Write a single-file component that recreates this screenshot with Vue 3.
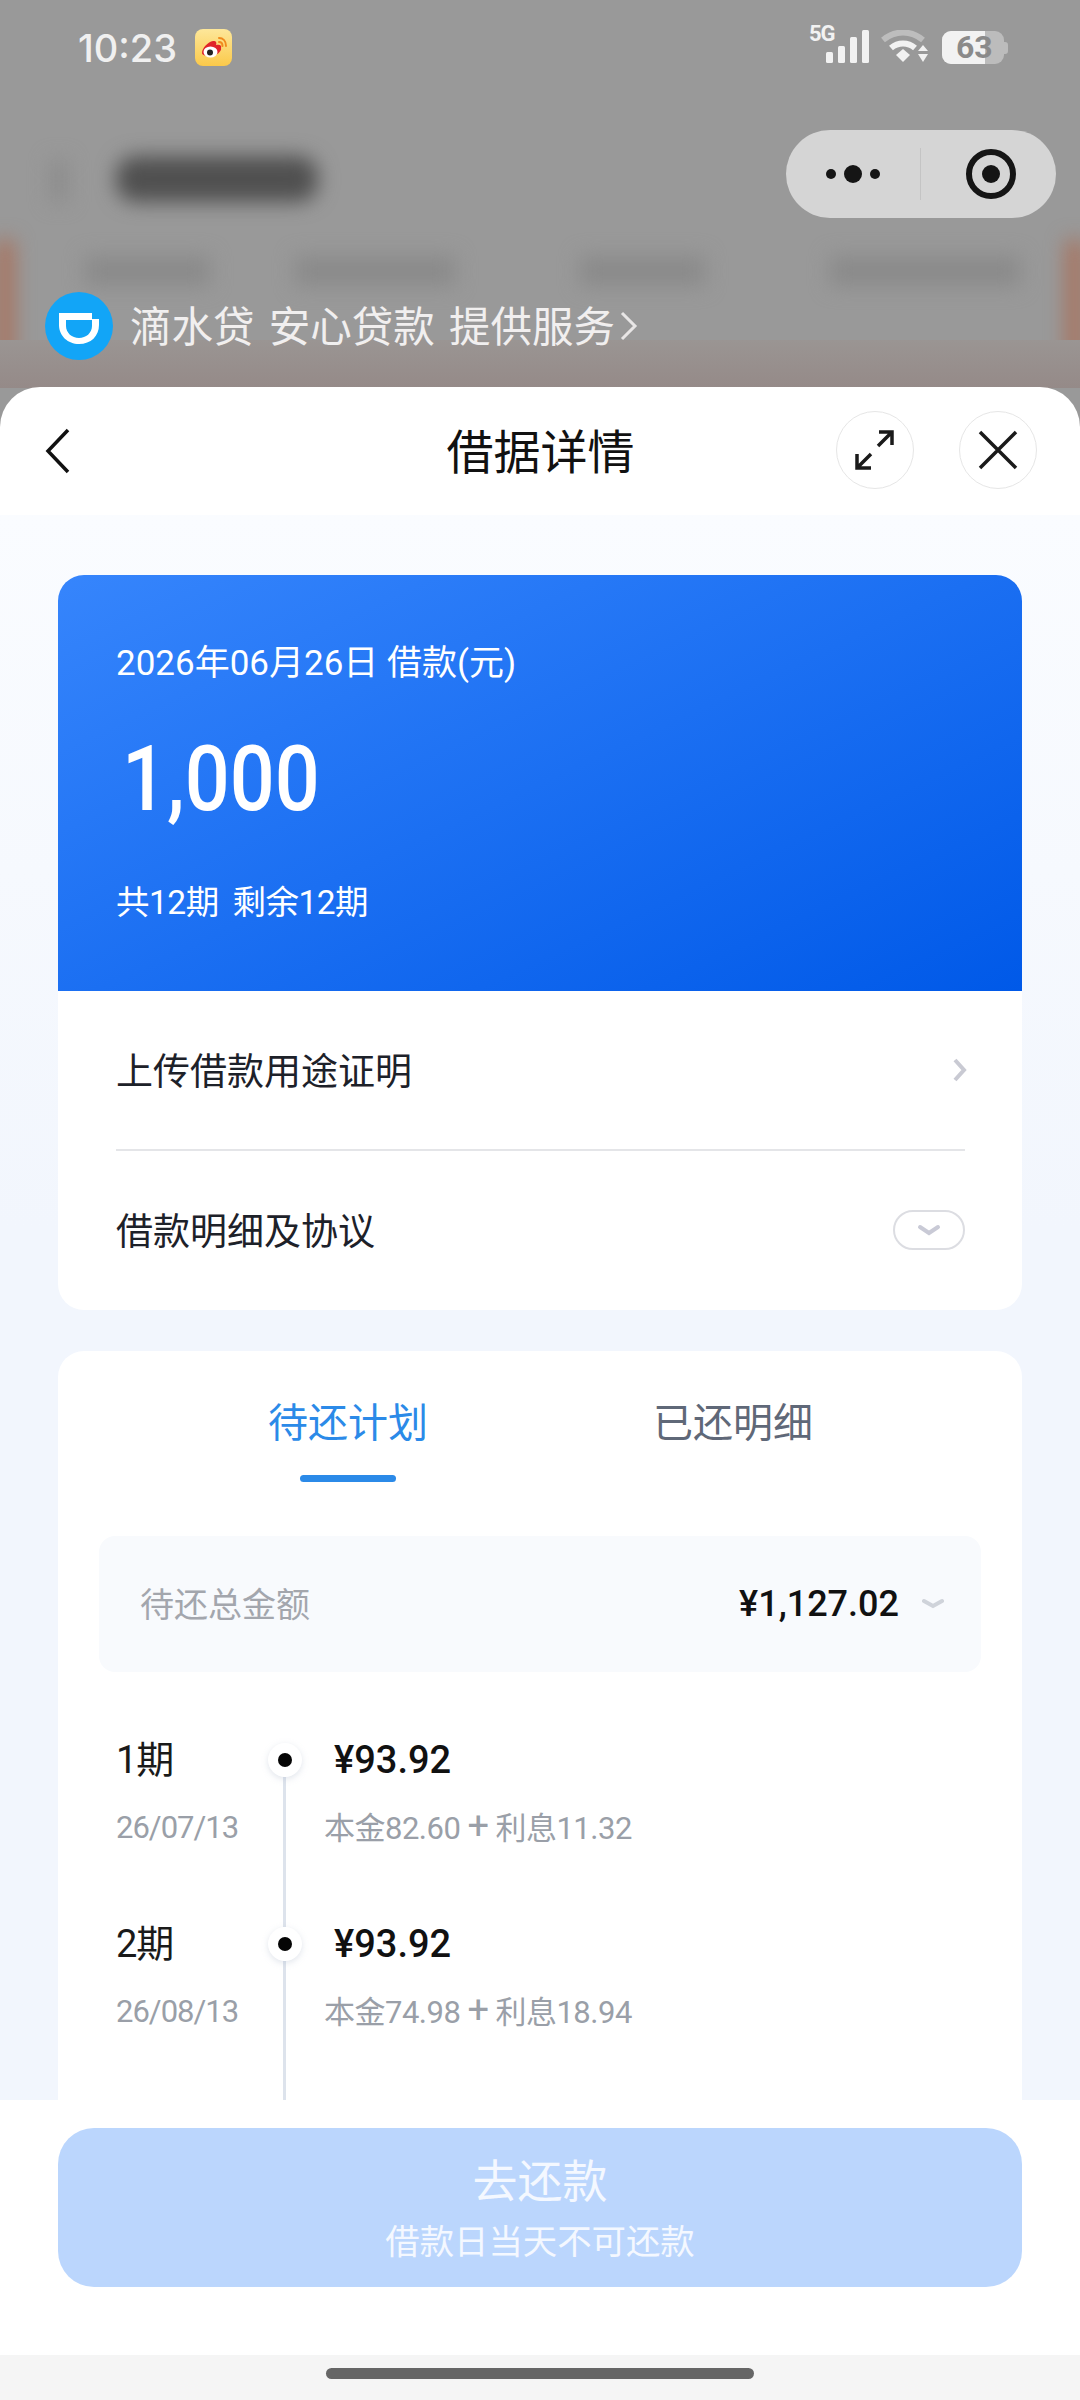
<template>
  <div class="page">
    <div class="backdrop">
      <div class="blur-layer">
        <span class="blur blur-back"></span>
        <span class="blur blur-title"></span>
        <span class="blur blur-side left"></span>
        <span class="blur blur-side right"></span>
        <span class="blur blur-tab t1"></span>
        <span class="blur blur-tab t2"></span>
        <span class="blur blur-tab t3"></span>
        <span class="blur blur-tab t4"></span>
        <span class="blur-band"></span>
      </div>

      <div class="status-bar">
        <div class="status-left">
          <span class="time">10:23</span>
          <svg class="weibo" width="38" height="38" viewBox="0 0 38 38">
            <defs>
              <linearGradient id="wb" x1="0" y1="0" x2="0" y2="1">
                <stop offset="0" stop-color="#fde79a" />
                <stop offset="1" stop-color="#fbc94a" />
              </linearGradient>
            </defs>
            <rect width="37" height="37" rx="8" fill="url(#wb)" />
            <path d="M7 24c0-5 6-11 11-12 3-.6 4 1.400 3 4 4-1 6 .5 5 3 1 3-4 8-11 8-5 0-8-1-8-3z" fill="#e0252a" />
            <ellipse cx="15.500" cy="23" rx="7" ry="5.500" fill="#fff" />
            <circle cx="15" cy="23.500" r="3" fill="#222" />
            <path d="M24 9c4 0 7 3 7 8M24 13c2 0 3.500 1.500 3.500 4" fill="none" stroke="#f08a1d" stroke-width="2" stroke-linecap="round" />
          </svg>
        </div>
        <div class="status-right">
          <div class="signal">
            <span class="net">5G</span>
            <svg width="44" height="34" viewBox="0 0 44 34">
              <rect x="0" y="22" width="7" height="11" rx="1.500" fill="#f2f2f2" />
              <rect x="12" y="16" width="7" height="17" rx="1.500" fill="#f2f2f2" />
              <rect x="24" y="7" width="7" height="26" rx="1.500" fill="#f2f2f2" />
              <rect x="36" y="0" width="7" height="33" rx="1.500" fill="#f2f2f2" />
            </svg>
          </div>
          <svg class="wifi" width="50" height="34" viewBox="0 0 50 34">
            <path d="M3 10C15 0 31 0 43 10" fill="none" stroke="#bdbdbd" stroke-width="6" />
            <path d="M11 18C18 12 28 12 35 18" fill="none" stroke="#f2f2f2" stroke-width="6" />
            <path d="M16 25l7-6 7 6-7 7z" fill="#f2f2f2" />
            <path d="M38 21l5-6 5 6zM38 24h10l-5 8z" fill="#f2f2f2" />
          </svg>
          <div class="battery">
            <span class="battery-fill"></span>
            <span class="battery-num">63</span>
            <span class="battery-cap"></span>
          </div>
        </div>
      </div>

      <div class="capsule">
        <div class="capsule-dots">
          <i class="dot-s"></i><i class="dot-l"></i><i class="dot-s"></i>
        </div>
        <span class="capsule-line"></span>
        <div class="capsule-target"><i></i></div>
      </div>

      <div class="brand">
        <svg class="brand-logo" width="68" height="68" viewBox="0 0 68 68">
          <circle cx="34" cy="34" r="34" fill="#12a5f7" />
          <path fill="#fff" fill-rule="evenodd" d="M14 21H47V27H54V33C54 44 46 52 34 52C23 52 14 44 14 33ZM21 28V34C21 41 27 46 34 46C41 46 47 41 47 34V28Z" />
        </svg>
        <span class="brand-text">滴水贷 安心贷款 提供服务</span>
        <svg width="20" height="32" viewBox="0 0 20 32">
          <path d="M3 3l13 13-13 13" fill="none" stroke="#e8e6e6" stroke-width="3" />
        </svg>
      </div>
    </div>

    <div class="sheet">
      <div class="sheet-head">
        <svg class="back" width="28" height="46" viewBox="0 0 28 46">
          <path d="M24 2L4 23l20 21" fill="none" stroke="#111" stroke-width="3.500" />
        </svg>
        <div class="sheet-title">借据详情</div>
        <div class="head-actions">
          <div class="round-btn">
            <svg width="44" height="44" viewBox="0 0 44 44">
              <path d="M25 18L38 5M26 4h13v13M18 26L5 39M4 26v14h14" fill="none" stroke="#1a1a1a" stroke-width="3.500" />
            </svg>
          </div>
          <div class="round-btn">
            <svg width="40" height="40" viewBox="0 0 40 40">
              <path d="M2 2l36 36M38 2L2 38" fill="none" stroke="#1a1a1a" stroke-width="3.500" />
            </svg>
          </div>
        </div>
      </div>

      <div class="content">
        <div class="card">
          <div class="loan-head">
            <div class="loan-date">2026年06月26日 借款(元)</div>
            <div class="loan-amount">1,000</div>
            <div class="loan-period">共12期 剩余12期</div>
          </div>
          <div class="link-list">
            <div class="link-row line">
              <span>上传借款用途证明</span>
              <svg width="16" height="24" viewBox="0 0 16 24">
                <path d="M3 2l9 10-9 10" fill="none" stroke="#c9cad3" stroke-width="4" />
              </svg>
            </div>
            <div class="link-row">
              <span>借款明细及协议</span>
              <div class="pill">
                <svg width="24" height="12" viewBox="0 0 24 12">
                  <path d="M3 3l9 6 9-6" fill="none" stroke="#c9cad6" stroke-width="4" stroke-linecap="round" />
                </svg>
              </div>
            </div>
          </div>
        </div>

        <div class="card plan">
          <div class="tabs">
            <div class="tab active">待还计划</div>
            <div class="tab">已还明细</div>
          </div>

          <div class="total">
            <span class="total-label">待还总金额</span>
            <div class="total-right">
              <span class="total-num">¥1,127.02</span>
              <svg width="22" height="12" viewBox="0 0 22 12">
                <path d="M2 3l9 5 9-5" fill="none" stroke="#cfd3da" stroke-width="4" stroke-linecap="round" />
              </svg>
            </div>
          </div>

          <div class="timeline">
            <div v-for="item in plans" :key="item.no" class="plan-row">
              <div class="plan-left">
                <div class="plan-no">{{ item.no }}期</div>
                <div class="plan-date">{{ item.date }}</div>
              </div>
              <div class="axis">
                <div class="axis-dot"><i></i></div>
                <div class="axis-line"></div>
              </div>
              <div class="plan-right">
                <div class="plan-money">¥{{ item.money }}</div>
                <div class="plan-detail">
                  本金{{ item.base }}<em>+</em>利息{{ item.rate }}
                </div>
              </div>
            </div>
          </div>
        </div>
      </div>

      <div class="footer">
        <div class="pay-btn">
          <div class="pay-title">去还款</div>
          <div class="pay-sub">借款日当天不可还款</div>
        </div>
      </div>

      <div class="nav-bar"><span></span></div>
    </div>
  </div>
</template>

<script setup>
const plans = [
  { no: 1, date: '26/07/13', money: '93.92', base: '82.60', rate: '11.32' },
  { no: 2, date: '26/08/13', money: '93.92', base: '74.98', rate: '18.94' }
]
</script>

<style>
html,
body {
  margin: 0;
  background: #999;
}
</style>

<style scoped>
.page {
  width: 1080px;
  height: 2400px;
  display: flex;
  flex-direction: column;
  overflow: hidden;
  font-family: Roboto, "Noto Sans CJK SC", sans-serif;
}

.backdrop {
  position: relative;
  height: 388px;
  flex: none;
  background: #999;
  overflow: hidden;
}

.blur-layer {
  position: absolute;
  inset: 0;
}

.blur {
  position: absolute;
  filter: blur(10px);
}

.blur-back {
  left: 50px;
  top: 160px;
  width: 18px;
  height: 42px;
  background: #8c8c8c;
}

.blur-title {
  left: 116px;
  top: 156px;
  width: 202px;
  height: 46px;
  background: #505050;
  border-radius: 20px;
}

.blur-side {
  top: 240px;
  width: 18px;
  height: 140px;
  background: #a8715c;
}

.blur-side.left {
  left: -4px;
}

.blur-side.right {
  right: -4px;
}

.blur-tab {
  top: 256px;
  height: 30px;
  background: #8a8a8a;
}

.t1 {
  left: 85px;
  width: 125px;
}

.t2 {
  left: 295px;
  width: 160px;
}

.t3 {
  left: 580px;
  width: 125px;
}

.t4 {
  left: 830px;
  width: 190px;
}

.blur-band {
  position: absolute;
  left: 0;
  right: 0;
  top: 340px;
  height: 48px;
  background: linear-gradient(#9a9593, #958a88);
}

.status-bar {
  position: relative;
  height: 96px;
  padding: 0 76px 0 78px;
  display: flex;
  justify-content: space-between;
  align-items: center;
}

.status-left {
  display: flex;
  align-items: center;
  gap: 18px;
}

.time {
  font-family: Inter, sans-serif;
  font-size: 38px;
  font-weight: 500;
  color: #f0f0f0;
}

.status-right {
  display: flex;
  align-items: flex-end;
  gap: 10px;
  height: 34px;
  margin-top: -2px;
}

.signal {
  position: relative;
  width: 44px;
}

.net {
  position: absolute;
  left: -17px;
  top: -7px;
  font-size: 22px;
  font-weight: 700;
  line-height: 22px;
  letter-spacing: -1px;
  color: #f2f2f2;
}

.signal svg,
.wifi {
  display: block;
}

.battery {
  position: relative;
  width: 62px;
  height: 33px;
  margin-left: 2px;
  border-radius: 9px;
  background: #bcbcbc;
  overflow: visible;
}

.battery-fill {
  position: absolute;
  left: 0;
  top: 0;
  bottom: 0;
  width: 43px;
  border-radius: 9px 0 0 9px;
  background: #f2f2f2;
}

.battery-num {
  position: absolute;
  left: 14px;
  top: 0;
  font-size: 32px;
  font-weight: 700;
  line-height: 33px;
  color: #8a8a8a;
}

.battery-cap {
  position: absolute;
  right: -4px;
  top: 11px;
  width: 4px;
  height: 12px;
  border-radius: 0 3px 3px 0;
  background: #bcbcbc;
}

.capsule {
  position: relative;
  width: 270px;
  height: 88px;
  margin: 34px 24px 0 auto;
  border-radius: 44px;
  background: #d5d5d5;
  display: flex;
  align-items: center;
}

.capsule-dots {
  width: 134px;
  padding-right: 1px;
  box-sizing: border-box;
  display: flex;
  align-items: center;
  justify-content: center;
  gap: 8px;
}

.dot-s {
  width: 10px;
  height: 10px;
  border-radius: 50%;
  background: #151515;
}

.dot-l {
  width: 18px;
  height: 18px;
  border-radius: 50%;
  background: #151515;
}

.capsule-line {
  width: 1px;
  height: 52px;
  background: #c4c4c4;
}

.capsule-target {
  flex: 1;
  display: flex;
  align-items: center;
  justify-content: center;
  padding-left: 4px;
}

.capsule-target i {
  width: 50px;
  height: 50px;
  box-sizing: border-box;
  border: 6px solid #151515;
  border-radius: 50%;
  display: flex;
  align-items: center;
  justify-content: center;
}

.capsule-target i::after {
  content: '';
  width: 18px;
  height: 18px;
  border-radius: 50%;
  background: #151515;
}

.brand {
  position: relative;
  display: flex;
  align-items: center;
  margin-top: 74px;
  padding-left: 45px;
}

.brand-logo {
  margin-right: 17px;
}

.brand-text {
  font-family: "Noto Sans CJK SC", sans-serif;
  font-size: 41.500px;
  word-spacing: 5px;
  line-height: 60px;
  margin-top: -4px;
  color: #f1efef;
  margin-right: 4px;
  white-space: pre;
}

.sheet {
  flex: 1;
  min-height: 0;
  display: flex;
  flex-direction: column;
  background: #fff;
  border-radius: 40px 40px 0 0;
  margin-top: -1px;
  position: relative;
}

.sheet-head {
  height: 128px;
  flex: none;
  display: grid;
  grid-template-columns: 1fr auto 1fr;
  align-items: center;
  padding: 0 43px 0 44px;
}

.back {
  display: block;
}

.sheet-title {
  margin-top: -5px;
  font-family: "Noto Sans CJK SC", sans-serif;
  font-size: 47px;
  color: #111;
}

.head-actions {
  display: flex;
  justify-content: flex-end;
  gap: 45px;
  margin-top: -2px;
}

.round-btn {
  width: 78px;
  height: 78px;
  box-sizing: border-box;
  border: 1px solid #e6e6e6;
  border-radius: 50%;
  display: flex;
  align-items: center;
  justify-content: center;
}

.content {
  flex: 1;
  min-height: 0;
  overflow: hidden;
  padding: 60px 58px 0;
  background: linear-gradient(#fafcff, #f2f6fd 45%);
}

.card {
  background: #fff;
  border-radius: 26px;
  overflow: hidden;
}

.loan-head {
  height: 416px;
  box-sizing: border-box;
  padding: 64px 58px 0;
  color: #fff;
  background: linear-gradient(155deg, #3685fc, #0059e8);
}

.loan-date {
  font-size: 35px;
  line-height: 50px;
}

.loan-amount {
  margin: 46px 0 0 6px;
  font-size: 90px;
  font-weight: 500;
  line-height: 90px;
  transform: scaleX(0.88);
  transform-origin: left center;
}

.loan-period {
  margin-top: 53px;
  font-size: 33.500px;
  line-height: 50px;
  letter-spacing: -0.5px;
  word-spacing: 6px;
}

.link-list {
  padding: 0 57px 0 58px;
}

.link-row {
  display: flex;
  justify-content: space-between;
  align-items: center;
  font-family: "Noto Sans CJK SC", sans-serif;
  font-size: 37px;
  color: #1d2129;
  height: 159px;
}

.link-row span {
  margin-top: -3px;
}

.link-row.line {
  height: 160px;
  box-sizing: border-box;
  border-bottom: 2px solid #e4e5e8;
}

.link-row svg {
  display: block;
}

.link-row:first-child svg {
  margin-right: -3px;
}

.pill {
  width: 72px;
  height: 40px;
  margin-top: -2px;
  box-sizing: border-box;
  border: 2px solid #dcdde2;
  border-radius: 20px;
  display: flex;
  align-items: center;
  justify-content: center;
}

.plan {
  margin-top: 41px;
  border-radius: 26px 26px 0 0;
  padding: 0 41px;
  min-height: 900px;
}

.tabs {
  height: 131px;
  display: flex;
  font-family: "Noto Sans CJK SC", sans-serif;
  font-size: 40px;
  color: #5f6878;
}

.tab {
  position: relative;
  line-height: 138px;
  height: 131px;
}

.tab:first-child {
  margin-left: 169px;
  margin-right: 225px;
}

.tab.active {
  color: #2b8ae8;
}

.tab.active::after {
  content: '';
  position: absolute;
  left: 32px;
  bottom: 0;
  width: 96px;
  height: 7px;
  border-radius: 4px;
  background: #2b8ae8;
}

.total {
  margin-top: 54px;
  height: 136px;
  padding: 0 37px 0 41px;
  border-radius: 16px;
  background: #f8fafd;
  display: flex;
  justify-content: space-between;
  align-items: center;
}

.total-label {
  margin-top: -4px;
  font-family: "Noto Sans CJK SC", sans-serif;
  font-size: 34px;
  color: #a3a6ad;
}

.total-right {
  display: flex;
  align-items: center;
  gap: 23px;
}

.total-num {
  font-size: 36px;
  font-weight: 500;
  color: #111;
}

.timeline {
  margin-top: 71px;
  padding-left: 17px;
}

.plan-row {
  display: flex;
  height: 184px;
}

.plan-left {
  width: 147px;
}

.plan-no {
  height: 34px;
  line-height: 34px;
  font-size: 38px;
  letter-spacing: -1px;
  color: #1a1a1a;
}

.plan-date,
.plan-detail {
  margin-top: 34px;
  height: 34px;
  line-height: 34px;
  font-size: 31px;
  letter-spacing: -1px;
  color: #9a9fa8;
}

.plan-detail {
  letter-spacing: -0.5px;
}

.axis {
  width: 44px;
  display: flex;
  flex-direction: column;
  align-items: center;
}

.axis-dot {
  width: 34px;
  height: 34px;
  flex: none;
  border-radius: 50%;
  background: #fff;
  box-shadow: 0 2px 6px rgba(170, 180, 200, 0.35);
  display: flex;
  align-items: center;
  justify-content: center;
  position: relative;
}

.axis-dot i {
  width: 14px;
  height: 14px;
  border-radius: 50%;
  background: #050505;
}

.axis-line {
  flex: 1;
  width: 3px;
  margin-right: 2px;
  background: #dde3ec;
}

.plan-right {
  padding-left: 17px;
}

.plan-money {
  height: 34px;
  line-height: 34px;
  padding-left: 10px;
  font-size: 38px;
  font-weight: 500;
  color: #111;
}

.plan-detail em {
  font-style: normal;
  font-size: 38px;
  line-height: 30px;
  margin: 0 7px;
}

.footer {
  flex: none;
  height: 255px;
  padding: 28px 58px 0;
  box-sizing: border-box;
  background: #fff;
}

.pay-btn {
  height: 159px;
  border-radius: 36px;
  background: #bbd6fd;
  color: #f4f8ff;
  font-family: "Noto Sans CJK SC", sans-serif;
  text-align: center;
}

.pay-title {
  padding-top: 25px;
  font-size: 45px;
  line-height: 52px;
}

.pay-sub {
  margin-top: 12px;
  font-size: 34.400px;
  line-height: 44px;
}

.nav-bar {
  flex: none;
  height: 45px;
  background: #f5f5f5;
  display: flex;
  justify-content: center;
  padding-top: 13px;
  box-sizing: border-box;
}

.nav-bar span {
  width: 428px;
  height: 11px;
  border-radius: 6px;
  background: #666;
}
</style>
